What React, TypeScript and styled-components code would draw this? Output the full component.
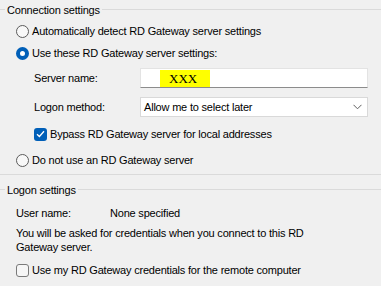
import React from 'react';
import styled, { createGlobalStyle } from 'styled-components';

const Global = createGlobalStyle`
  html, body { margin: 0; padding: 0; background: #f0f0f0; }
  body {
    font-family: "Liberation Sans", Arial, sans-serif;
    font-size: 11px;
    color: #000;
  }
`;

const Page = styled.div`
  width: 381px;
  height: 286px;
  overflow: hidden;
  background: #f0f0f0;
  display: flex;
  flex-direction: column;
  letter-spacing: -0.2px;
`;

const Group = styled.section<{ $bordered?: boolean; $top?: number }>`
  display: flex;
  flex-direction: column;
  margin-top: ${p => p.$top ?? 0}px;
  padding: 0 13px ${p => (p.$bordered ? 3 : 0)}px 16px;
  border-bottom: ${p => (p.$bordered ? '1px solid #dadada' : 'none')};
`;

const Header = styled.div`
  height: 19px;
  margin-left: -16px;
  margin-right: -13px;
  display: flex;
  align-items: center;
  gap: 2px;
  &::before {
    content: '';
    width: 5px;
    height: 1px;
    background: #dadada;
  }
  &::after {
    content: '';
    flex: 1;
    height: 1px;
    background: #dadada;
  }
`;

const OptionRow = styled.label<{ $top?: number; $indent?: number }>`
  height: 22px;
  margin-top: ${p => p.$top ?? 0}px;
  margin-left: ${p => p.$indent ?? 0}px;
  display: flex;
  align-items: center;
  gap: 3px;
`;

const Radio = styled.span<{ $checked?: boolean }>`
  width: 13px;
  height: 13px;
  box-sizing: border-box;
  border-radius: 50%;
  flex: none;
  background: ${p => (p.$checked ? '#fff' : '#f8f8f8')};
  border: ${p => (p.$checked ? '4px solid #005fb8' : '1px solid #5b5b5b')};
`;

const Check = styled.span<{ $checked?: boolean }>`
  width: 13px;
  height: 13px;
  box-sizing: border-box;
  border-radius: 3px;
  flex: none;
  display: flex;
  align-items: center;
  justify-content: center;
  background: ${p => (p.$checked ? '#005fb8' : '#f6f6f6')};
  border: ${p => (p.$checked ? 'none' : '1px solid #7a7a7a')};
`;

const FieldRow = styled.div<{ $top?: number }>`
  height: 20px;
  margin-top: ${p => p.$top ?? 0}px;
  margin-left: 18px;
  display: flex;
  align-items: center;
`;

const FieldLabel = styled.span`
  width: 106px;
  flex: none;
`;

const TextBox = styled.div`
  flex: 1;
  height: 20px;
  box-sizing: border-box;
  background: #fff;
  border: 1px solid #e3e3e3;
  border-bottom-color: #8c8c8c;
  padding-left: 19px;
  display: flex;
  align-items: flex-start;
`;

const Highlight = styled.span`
  width: 50px;
  height: 17px;
  margin-top: 1px;
  box-sizing: border-box;
  padding-left: 9px;
  background: #ffff00;
  font-family: "Liberation Serif", "Times New Roman", serif;
  font-size: 13px;
  letter-spacing: 0;
  line-height: 17px;
`;

const Combo = styled.div`
  flex: 1;
  height: 20px;
  box-sizing: border-box;
  background: #fff;
  border: 1px solid #d9d9d9;
  padding: 0 5px 0 3px;
  display: flex;
  align-items: center;
  justify-content: space-between;
`;

const InfoRow = styled.div<{ $top?: number }>`
  height: 16px;
  margin-top: ${p => p.$top ?? 0}px;
  display: flex;
  align-items: center;
`;

const InfoLabel = styled.span`
  width: 94px;
  flex: none;
`;

const Paragraph = styled.p<{ $top?: number }>`
  margin: ${p => p.$top ?? 0}px 0 0;
  line-height: 14px;
  width: 300px;
`;

const Chevron = () => (
  <svg width="9" height="6" viewBox="0 0 9 6">
    <polyline points="0.5,0.8 4.5,4.8 8.5,0.8" fill="none" stroke="#5f5f5f" strokeWidth="1" />
  </svg>
);

const Tick = () => (
  <svg width="9" height="8" viewBox="0 0 9 8">
    <polyline points="1,4.2 3.4,6.5 8,1.3" fill="none" stroke="#fff" strokeWidth="1.3" />
  </svg>
);

export default function App() {
  return (
    <Page>
      <Global />
      <Group $bordered>
        <Header>Connection settings</Header>
        <OptionRow $top={1}>
          <Radio />
          Automatically detect RD Gateway server settings
        </OptionRow>
        <OptionRow>
          <Radio $checked />
          Use these RD Gateway server settings:
        </OptionRow>
        <FieldRow $top={4}>
          <FieldLabel>Server name:</FieldLabel>
          <TextBox>
            <Highlight>XXX</Highlight>
          </TextBox>
        </FieldRow>
        <FieldRow $top={9}>
          <FieldLabel>Logon method:</FieldLabel>
          <Combo>
            <span>Allow me to select later</span>
            <Chevron />
          </Combo>
        </FieldRow>
        <OptionRow $top={6} $indent={18}>
          <Check $checked>
            <Tick />
          </Check>
          Bypass RD Gateway server for local addresses
        </OptionRow>
        <OptionRow $top={4}>
          <Radio />
          Do not use an RD Gateway server
        </OptionRow>
      </Group>
      <Group $top={5}>
        <Header>Logon settings</Header>
        <InfoRow $top={6}>
          <InfoLabel>User name:</InfoLabel>
          None specified
        </InfoRow>
        <Paragraph $top={5}>
          You will be asked for credentials when you connect to this RD Gateway server.
        </Paragraph>
        <OptionRow $top={5}>
          <Check />
          Use my RD Gateway credentials for the remote computer
        </OptionRow>
      </Group>
    </Page>
  );
}
